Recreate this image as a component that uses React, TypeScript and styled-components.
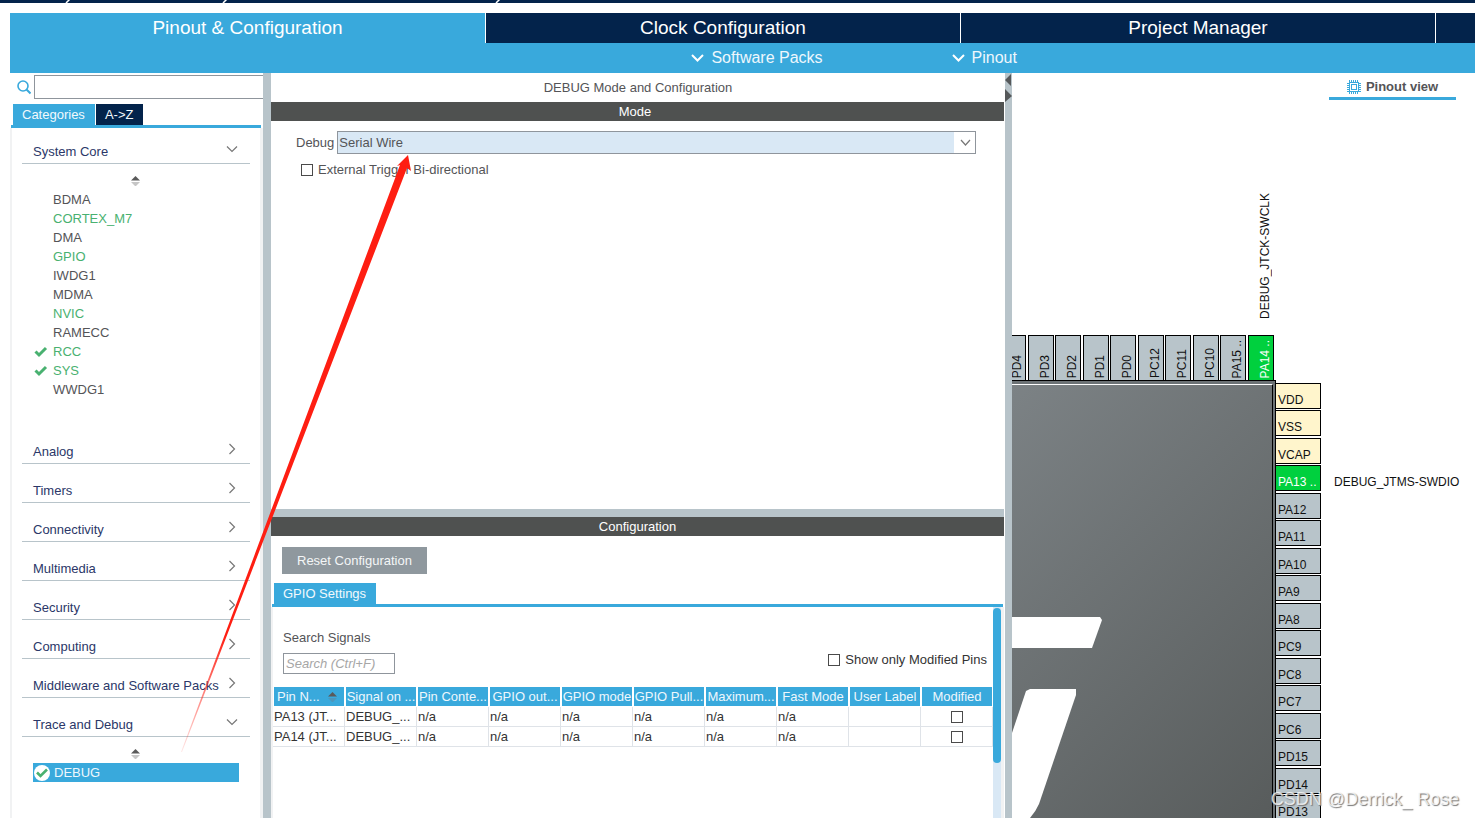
import React from "react";
import styled, { createGlobalStyle, css } from "styled-components";

const c = {
  navy: "#03234b",
  blue: "#39a9dc",
  steel: "#b8c4ca",
  bar: "#4f5150",
  text: "#545457",
  heading: "#2b3768",
  green: "#49b170",
  edge: "#8f959c",
  pale: "#d9e8f5",
  frame: "#f1f2f3",
};

const GlobalStyle = createGlobalStyle`
  *, *::before, *::after { box-sizing: border-box; }
  body {
    margin: 0;
    background: #fff;
    color: ${c.text};
    font: 13px/18px "Liberation Sans", Arial, sans-serif;
  }
  button, input, select { font: inherit; color: inherit; }
  button { border: 0; padding: 0; background: none; cursor: pointer; }
  ul { list-style: none; margin: 0; padding: 0; }
  h1, h2, h3 { margin: 0; font: inherit; }
`;

const Page = styled.div`
  position: relative;
  display: flex;
  flex-direction: column;
  height: 100vh;
  overflow: hidden;
`;

/* ---------- header ---------- */

const TopStrip = styled.div`
  flex: none;
  height: 3px;
  margin-bottom: 10px;
  background: ${c.navy};
  svg { display: block; }
`;

const MainTabs = styled.nav`
  flex: none;
  display: grid;
  grid-template-columns: repeat(3, minmax(0, 475fr)) minmax(0, 40fr);
  height: 30px;
  margin-left: 10px;
`;

const MainTab = styled.button<{ $active?: boolean }>`
  color: #fff;
  font-size: 19px;
  line-height: 30px;
  background: ${(p) => (p.$active ? c.blue : c.navy)};
  ${(p) => !p.$active && css`border-left: 1px solid #fff;`}
`;

const SubBar = styled.div`
  flex: none;
  display: flex;
  height: 30px;
  margin-left: 10px;
  padding-left: 46.2%;
  gap: 129px;
  background: ${c.blue};
`;

const SubButton = styled.button`
  display: flex;
  align-items: center;
  gap: 7px;
  color: #eef7fc;
  font-size: 16px;
  line-height: 30px;
  white-space: nowrap;
`;

/* ---------- body ---------- */

const Body = styled.div`
  flex: 1;
  min-height: 0;
  display: grid;
  grid-template-columns: 253px 8px minmax(0, 734fr) 7px minmax(0, 463fr);
  margin-left: 10px;
`;

const Splitter = styled.div`
  background: ${c.steel};
  svg { display: block; }
`;

const Column = styled.div`
  display: flex;
  flex-direction: column;
  min-width: 0;
  min-height: 0;
`;

/* ---------- sidebar ---------- */

const SearchRow = styled.label`
  flex: none;
  display: flex;
  align-items: center;
  gap: 3px;
  padding: 2px 0 0 7px;
`;

const SearchInput = styled.input`
  flex: 1;
  min-width: 0;
  height: 24px;
  padding: 0 4px;
  border: 1px solid ${c.edge};
  border-right: 0;
  background: #fff;
`;

const TabRow = styled.div`
  flex: none;
  display: flex;
  gap: 1px;
  border-bottom: 3px solid ${c.blue};
`;

const SideTabs = styled(TabRow)`
  margin: 5px 2px 0 1px;
  padding-left: 2px;
`;

const ConfigTabs = styled(TabRow)`
  margin: 9px 2px 0 1px;
  padding-left: 2px;
`;

const SmallTab = styled.button<{ $active?: boolean }>`
  height: 21px;
  padding: 0 10px 0 9px;
  color: #f2f9fd;
  background: ${(p) => (p.$active ? c.blue : c.navy)};
`;

const SidePanel = styled.div`
  flex: 1;
  min-height: 0;
  display: flex;
  flex-direction: column;
  gap: 10px;
  padding: 7px 10px 0;
  border-left: 2px solid ${c.frame};
  border-right: 3px solid ${c.frame};
`;

const GroupHead = styled.button`
  display: flex;
  align-items: flex-start;
  justify-content: space-between;
  width: 100%;
  height: 29px;
  padding: 7px 11px 0;
  border-bottom: 1px solid ${c.steel};
  color: ${c.heading};
  line-height: 20px;
  text-align: left;
  svg { flex: none; }
`;

const GroupBody = styled.div`
  padding: 12px 11px 26px;
`;

const SortIcon = styled.svg`
  display: block;
  margin: 0 auto 4px 98px;
`;

const Peripheral = styled.button<{ $tone?: "on" | "selected" }>`
  display: flex;
  align-items: center;
  width: 100%;
  height: 19px;
  color: ${(p) => (p.$tone === "selected" ? "#eef7fc" : p.$tone === "on" ? c.green : c.text)};
  background: ${(p) => (p.$tone === "selected" ? c.blue : "transparent")};
`;

const Mark = styled.span<{ $wide?: boolean }>`
  flex: none;
  display: flex;
  width: ${(p) => (p.$wide ? 21 : 20)}px;
  padding-left: 1px;
`;

/* ---------- centre ---------- */

const Title = styled.h1`
  flex: none;
  line-height: 29px;
  text-align: center;
`;

const Bar = styled.h2`
  flex: none;
  margin-right: 1px;
  line-height: 19px;
  color: #fff;
  text-align: center;
  background: ${c.bar};
`;

const ModeBar = styled(Bar)`
  padding-right: 5px;
`;

const ModePane = styled.section`
  flex: none;
  height: 388px;
  padding: 10px 29px 0 25px;
`;

const Field = styled.div`
  display: flex;
  align-items: center;
  gap: 3px;
`;

const SelectBox = styled.div`
  position: relative;
  flex: 1;
  display: flex;
  svg { position: absolute; top: 8px; right: 5px; pointer-events: none; }
`;

const Select = styled.select`
  appearance: none;
  flex: 1;
  height: 23px;
  padding: 0 24px 0 1px;
  border: 1px solid ${c.edge};
  border-radius: 0;
  background: linear-gradient(to left, #fff 21px, ${c.pale} 21px);
`;

const CheckLabel = styled.label<{ $dark?: boolean }>`
  display: flex;
  align-items: center;
  gap: 5px;
  color: ${(p) => (p.$dark ? "#333" : c.text)};
  white-space: nowrap;
`;

const ModeChecks = styled.div`
  padding: 7px 0 0 5px;
`;

const Check = styled.input.attrs({ type: "checkbox" })`
  appearance: none;
  flex: none;
  width: 12px;
  height: 12px;
  margin: 0;
  border: 1px solid #4a4a4a;
  background: #fff;
`;

const HSplitter = styled.div`
  flex: none;
  height: 8px;
  margin-right: 1px;
  background: ${c.steel};
`;

const ResetButton = styled.button`
  align-self: flex-start;
  flex: none;
  height: 27px;
  margin: 11px 0 0 11px;
  padding: 0 15px;
  color: #f4f6f7;
  background: #8f989e;
`;

const Scroller = styled.div`
  flex: 1;
  min-height: 0;
  display: grid;
  grid-template-columns: minmax(0, 1fr) 8px;
  margin-right: 1px;
  border-left: 2px solid ${c.frame};
  border-right: 3px solid ${c.frame};
`;

const Track = styled.div`
  padding-top: 1px;
  background: ${c.pale};
`;

const Thumb = styled.div`
  height: 155px;
  border-radius: 4px;
  background: ${c.blue};
`;

const Filters = styled.div`
  display: flex;
  align-items: flex-end;
  justify-content: space-between;
  padding: 22px 6px 13px 10px;
`;

const SignalSearch = styled.label`
  display: flex;
  flex-direction: column;
  gap: 6px;
`;

const SignalInput = styled.input`
  width: 112px;
  height: 21px;
  padding: 0 2px;
  border: 1px solid ${c.edge};
  &::placeholder { color: #a6a6a6; font-style: italic; opacity: 1; }
`;

const FilterCheck = styled.div`
  padding-bottom: 5px;
`;

const Table = styled.table`
  width: 100%;
  table-layout: fixed;
  border-collapse: separate;
  border-spacing: 0;
`;

const Th = styled.th`
  height: 20px;
  padding: 0;
  border: 1px solid #fff;
  border-top: 0;
  font-weight: 400;
  color: #eef7fc;
  background: ${c.blue};
  background-clip: padding-box;
  white-space: nowrap;
`;

const SortHead = styled.div`
  display: flex;
  align-items: center;
  justify-content: space-between;
  padding: 0 7px 0 3px;
`;

const Td = styled.td<{ $center?: boolean }>`
  height: 20px;
  padding: 0 1px;
  border-right: 1px solid #dfe3e8;
  border-bottom: 1px solid #dfe3e8;
  color: #333;
  line-height: 19px;
  white-space: nowrap;
  text-align: ${(p) => (p.$center ? "center" : "left")};
  input { display: block; margin: 0 auto; }
`;

/* ---------- pinout view ---------- */

const ViewTab = styled.button`
  align-self: flex-end;
  display: flex;
  align-items: center;
  justify-content: center;
  gap: 5px;
  width: 127px;
  height: 27px;
  margin-right: 19px;
  padding-top: 4px;
  border-bottom: 3px solid ${c.blue};
  font-weight: 700;
`;

const PinLayout = styled.div`
  flex: 1;
  min-height: 0;
  display: grid;
  grid-template-columns: minmax(0, 1fr) 45px 154px;
  grid-template-rows: 219px 16px 45px minmax(0, 1fr);
  overflow: hidden;
`;

const SignalTop = styled.div`
  grid-column: 1;
  grid-row: 1;
  display: flex;
  justify-content: flex-end;
  align-items: flex-end;
  padding-right: 3px;
  color: #111;
`;

const vertical = css`
  writing-mode: vertical-rl;
  transform: rotate(180deg);
`;

const PinText = styled.span<{ $vertical?: boolean }>`
  font-size: 12px;
  line-height: 16px;
  color: inherit;
  white-space: nowrap;
  ${(p) => p.$vertical && vertical}
`;

const TopPins = styled.ul`
  grid-column: 1;
  grid-row: 3;
  display: flex;
  flex-direction: row-reverse;
  padding-right: 2px;
  overflow: hidden;
`;

const RightPins = styled.ul`
  grid-column: 2;
  grid-row: 4;
  padding-top: 1px;
  overflow: hidden;
`;

type Kind = "io" | "power" | "used";
const pinFill: Record<Kind, string> = { io: c.steel, power: "#fff5cc", used: "#00d03e" };

const Pin = styled.li<{ $kind: Kind }>`
  flex: none;
  display: flex;
  border: 1px solid #000;
  color: ${(p) => (p.$kind === "used" ? "#fff" : "#111")};
  background: ${(p) => pinFill[p.$kind]};
`;

const TopPin = styled(Pin)`
  align-items: flex-end;
  justify-content: flex-end;
  width: 26px;
  padding-bottom: 2px;
  border-bottom: 0;
  &:nth-child(odd) { margin-left: 2px; }
  &:nth-child(even) { margin-left: 1px; }
`;

const RightPin = styled(Pin)`
  align-items: flex-end;
  height: 26px;
  padding-left: 2px;
  border-left: 0;
  &:nth-child(odd) { margin-top: 2px; }
  &:nth-child(even) { margin-top: 1px; }
`;

const ChipEdge = styled.div`
  grid-column: 1;
  grid-row: 4;
  padding: 3px 2px 0 0;
  border-top: 1px solid #000;
  border-right: 1px solid #000;
  background: #6c7275;
`;

const ChipBody = styled.div`
  display: flex;
  justify-content: flex-end;
  height: 100%;
  overflow: hidden;
  border-top: 1px solid #fff;
  border-right: 1px solid #000;
  background: linear-gradient(135deg, #7c8285, #585c5c);
  svg { flex: none; }
`;

const SignalRight = styled.div`
  grid-column: 3;
  grid-row: 4;
  padding: 93px 0 0 13px;
  color: #111;
`;

/* ---------- overlays ---------- */

const Arrow = styled.svg`
  position: absolute;
  left: 0;
  top: 0;
  pointer-events: none;
`;

const Watermark = styled.div`
  position: absolute;
  right: 16px;
  bottom: 8px;
  font-size: 18px;
  line-height: 22px;
  color: rgba(255, 255, 255, 0.75);
  text-shadow: 1px 1px 1px #777;
`;

/* ---------- icons ---------- */

const Chevron = ({ open }: { open?: boolean }) =>
  open ? (
    <svg width="14" height="14" viewBox="0 0 14 14" fill="none" stroke="#777" strokeWidth="1.200">
      <path d="M2 4.500 7 9.500 12 4.500" />
    </svg>
  ) : (
    <svg width="14" height="14" viewBox="0 0 14 14" fill="none" stroke="#777" strokeWidth="1.200">
      <path d="M4.500 2 9.500 7 4.500 12" />
    </svg>
  );

const BoldChevron = () => (
  <svg width="13" height="10" viewBox="0 0 13 10" fill="none" stroke="#fff" strokeWidth="2">
    <path d="M1 2 6.500 7.500 12 2" />
  </svg>
);

const SortArrows = ({ lower }: { lower: string }) => (
  <>
    <path d="M4.500 0 9 4.500H0Z" fill="#5a5a5a" />
    <path d="M4.500 10.500 9 6H0Z" fill={lower} />
  </>
);

const Sort = () => (
  <SortIcon width="9" height="10" viewBox="0 0 9 10">
    <SortArrows lower="#c6c6c6" />
  </SortIcon>
);

const CheckMark = () => (
  <svg width="14" height="12" viewBox="0 0 14 12" fill="none" stroke={c.green} strokeWidth="3">
    <path d="M1.500 5.500 5 9 12 2" />
  </svg>
);

const RoundCheck = () => (
  <svg width="16" height="16" viewBox="0 0 16 16" fill="none">
    <circle cx="8" cy="8" r="8" fill="#fff" />
    <path d="M3 7.500 6.500 11 13 4.500" stroke={c.green} strokeWidth="2.600" />
  </svg>
);

const ChipIcon = () => (
  <svg width="14" height="14" viewBox="0 0 14 14" fill="none" stroke={c.blue}>
    <rect x="2.500" y="2.500" width="9" height="9" />
    <rect x="4.500" y="4.500" width="5" height="5" />
    <path d="M2.500 0V2M4.500 0V2M6.500 0V2M8.500 0V2M10.500 0V2M2.500 12V14M4.500 12V14M6.500 12V14M8.500 12V14M10.500 12V14M0 3.500H2M0 5.500H2M0 7.500H2M0 9.500H2M0 11.500H2M12 3.500H14M12 5.500H14M12 7.500H14M12 9.500H14M12 11.500H14" />
  </svg>
);

/* ---------- data ---------- */

type Item = { name: string; on?: boolean; checked?: boolean };

const systemCore: Item[] = [
  { name: "BDMA" },
  { name: "CORTEX_M7", on: true },
  { name: "DMA" },
  { name: "GPIO", on: true },
  { name: "IWDG1" },
  { name: "MDMA" },
  { name: "NVIC", on: true },
  { name: "RAMECC" },
  { name: "RCC", on: true, checked: true },
  { name: "SYS", on: true, checked: true },
  { name: "WWDG1" },
];

const closedGroups = [
  "Analog",
  "Timers",
  "Connectivity",
  "Multimedia",
  "Security",
  "Computing",
  "Middleware and Software Packs",
];

const columns = [
  "Signal on ...",
  "Pin Conte...",
  "GPIO out...",
  "GPIO mode",
  "GPIO Pull...",
  "Maximum...",
  "Fast Mode",
  "User Label",
  "Modified",
];

const rows = ["PA13 (JT...", "PA14 (JT..."];

const topPins: [string, Kind][] = [
  ["PA14 ..", "used"],
  ["PA15 ..", "io"],
  ["PC10", "io"],
  ["PC11", "io"],
  ["PC12", "io"],
  ["PD0", "io"],
  ["PD1", "io"],
  ["PD2", "io"],
  ["PD3", "io"],
  ["PD4", "io"],
];

const rightPins: [string, Kind][] = [
  ["VDD", "power"],
  ["VSS", "power"],
  ["VCAP", "power"],
  ["PA13 ..", "used"],
  ["PA12", "io"],
  ["PA11", "io"],
  ["PA10", "io"],
  ["PA9", "io"],
  ["PA8", "io"],
  ["PC9", "io"],
  ["PC8", "io"],
  ["PC7", "io"],
  ["PC6", "io"],
  ["PD15", "io"],
  ["PD14", "io"],
  ["PD13", "io"],
];

/* ---------- sections ---------- */

const Sidebar = () => (
  <Column as="aside">
    <SearchRow>
      <svg width="14" height="15" viewBox="0 0 14 15" fill="none" stroke={c.blue}>
        <circle cx="6" cy="6" r="5" strokeWidth="1.600" />
        <path d="M9.500 9.500 13.500 13.500" strokeWidth="2" />
      </svg>
      <SearchInput type="text" aria-label="Search peripherals" />
    </SearchRow>
    <SideTabs>
      <SmallTab $active>Categories</SmallTab>
      <SmallTab>{"A->Z"}</SmallTab>
    </SideTabs>
    <SidePanel>
      <div>
        <GroupHead>
          System Core
          <Chevron open />
        </GroupHead>
        <GroupBody>
          <Sort />
          {systemCore.map((it) => (
            <Peripheral key={it.name} $tone={it.on ? "on" : undefined}>
              <Mark>{it.checked && <CheckMark />}</Mark>
              {it.name}
            </Peripheral>
          ))}
        </GroupBody>
      </div>
      {closedGroups.map((g) => (
        <GroupHead key={g}>
          {g}
          <Chevron />
        </GroupHead>
      ))}
      <div>
        <GroupHead>
          Trace and Debug
          <Chevron open />
        </GroupHead>
        <GroupBody>
          <Sort />
          <Peripheral $tone="selected">
            <Mark $wide>
              <RoundCheck />
            </Mark>
            DEBUG
          </Peripheral>
        </GroupBody>
      </div>
    </SidePanel>
  </Column>
);

const Center = () => (
  <Column as="main">
    <Title>DEBUG Mode and Configuration</Title>
    <ModeBar>Mode</ModeBar>
    <ModePane>
      <Field>
        <label htmlFor="debug-mode">Debug</label>
        <SelectBox>
          <Select id="debug-mode" defaultValue="Serial Wire">
            <option>Serial Wire</option>
          </Select>
          <svg width="11" height="8" viewBox="0 0 11 8" fill="none" stroke="#777" strokeWidth="1.200">
            <path d="M1 1 5.500 6 10 1" />
          </svg>
        </SelectBox>
      </Field>
      <ModeChecks>
        <CheckLabel>
          <Check />
          External Trigger Bi-directional
        </CheckLabel>
      </ModeChecks>
    </ModePane>
    <HSplitter />
    <Bar>Configuration</Bar>
    <ResetButton>Reset Configuration</ResetButton>
    <ConfigTabs>
      <SmallTab $active>GPIO Settings</SmallTab>
    </ConfigTabs>
    <Scroller>
      <div>
        <Filters>
          <SignalSearch>
            Search Signals
            <SignalInput type="text" placeholder="Search (Ctrl+F)" />
          </SignalSearch>
          <FilterCheck>
            <CheckLabel $dark>
              <Check />
              Show only Modified Pins
            </CheckLabel>
          </FilterCheck>
        </Filters>
        <Table>
          <thead>
            <tr>
              <Th>
                <SortHead>
                  Pin N...
                  <svg width="9" height="10" viewBox="0 0 9 10">
                    <SortArrows lower="#4d96bb" />
                  </svg>
                </SortHead>
              </Th>
              {columns.map((h) => (
                <Th key={h}>{h}</Th>
              ))}
            </tr>
          </thead>
          <tbody>
            {rows.map((r) => (
              <tr key={r}>
                <Td>{r}</Td>
                <Td>DEBUG_...</Td>
                <Td>n/a</Td>
                <Td>n/a</Td>
                <Td>n/a</Td>
                <Td>n/a</Td>
                <Td>n/a</Td>
                <Td>n/a</Td>
                <Td />
                <Td $center>
                  <Check aria-label="Modified" />
                </Td>
              </tr>
            ))}
          </tbody>
        </Table>
      </div>
      <Track>
        <Thumb />
      </Track>
    </Scroller>
  </Column>
);

const PinoutView = () => (
  <Column as="section">
    <ViewTab>
      <ChipIcon />
      Pinout view
    </ViewTab>
    <PinLayout>
      <SignalTop>
        <PinText $vertical>DEBUG_JTCK-SWCLK</PinText>
      </SignalTop>
      <TopPins>
        {topPins.map(([name, kind]) => (
          <TopPin key={name} $kind={kind}>
            <PinText $vertical>{name}</PinText>
          </TopPin>
        ))}
      </TopPins>
      <ChipEdge>
        <ChipBody>
          <svg width="260" height="433" viewBox="0 0 260 433" fill="#fff">
            <path d="M0 232H88L90 235 80 263H0Z" />
            <path d="M0 348 14 306 18 304H64V310L27 419Q24 426 18 433H0Z" />
          </svg>
        </ChipBody>
      </ChipEdge>
      <RightPins>
        {rightPins.map(([name, kind]) => (
          <RightPin key={name} $kind={kind}>
            <PinText>{name}</PinText>
          </RightPin>
        ))}
      </RightPins>
      <SignalRight>
        <PinText>DEBUG_JTMS-SWDIO</PinText>
      </SignalRight>
    </PinLayout>
  </Column>
);

export default function App() {
  return (
    <Page>
      <GlobalStyle />
      <TopStrip>
        <svg width="520" height="3" viewBox="0 0 520 3" stroke="#fff" strokeWidth="1.500">
          <path d="M66 3 70 -1M223 3 227 -1M496 3 500 -1" />
        </svg>
      </TopStrip>
      <MainTabs>
        <MainTab $active>Pinout &amp; Configuration</MainTab>
        <MainTab>Clock Configuration</MainTab>
        <MainTab>Project Manager</MainTab>
        <MainTab aria-label="Tools" />
      </MainTabs>
      <SubBar>
        <SubButton>
          <BoldChevron />
          Software Packs
        </SubButton>
        <SubButton>
          <BoldChevron />
          Pinout
        </SubButton>
      </SubBar>
      <Body>
        <Sidebar />
        <Splitter />
        <Center />
        <Splitter>
          <svg width="7" height="30" viewBox="0 0 7 30" fill="#55585a">
            <path d="M6 1V13L0 7ZM0 16V29L7 23Z" />
          </svg>
        </Splitter>
        <PinoutView />
      </Body>
      <Arrow width="440" height="760" viewBox="0 0 440 760">
        <defs>
          <linearGradient id="fade" gradientUnits="userSpaceOnUse" x1="181" y1="752" x2="225" y2="635">
            <stop offset="0" stopColor="#fe1e12" stopOpacity="0.100" />
            <stop offset="1" stopColor="#fe1e12" />
          </linearGradient>
        </defs>
        <path d="M181 752 400 165 397 166 408 155 411 171 407 168 182 752Z" fill="url(#fade)" />
      </Arrow>
      <Watermark>CSDN @Derrick_ Rose</Watermark>
    </Page>
  );
}
